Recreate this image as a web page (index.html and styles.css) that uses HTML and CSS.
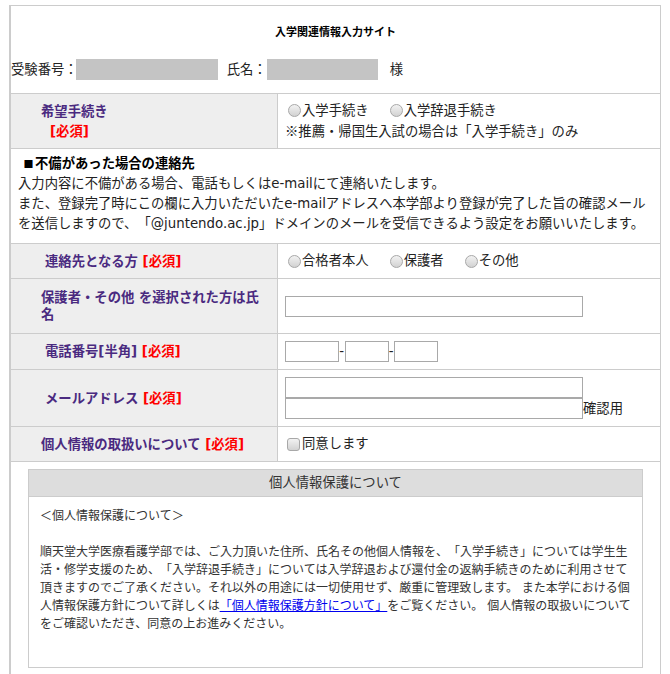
FILE: index.html
```html
<!DOCTYPE html>
<html lang="ja">
<head>
<meta charset="utf-8">
<title>入学関連情報入力サイト</title>
<link rel="stylesheet" href="styles.css">
</head>
<body>
<div class="page">
  <h1 class="title">入学関連情報入力サイト</h1>
  <div class="ident">
    <span>受験番号：</span><span class="mask w1"></span><span class="name-label">氏名：</span><span class="mask w2"></span><span class="sama">様</span>
  </div>

  <div class="form">
    <div class="row h55">
      <div class="th"><div class="lbl">希望手続き<span class="req req-block">[必須]</span></div></div>
      <div class="td">
        <div class="opts">
          <label class="opt"><input type="radio" name="proc" class="radio"><span>入学手続き</span></label>
          <label class="opt"><input type="radio" name="proc" class="radio"><span>入学辞退手続き</span></label>
        </div>
        <div class="note"><span class="cjk">※</span>推薦・帰国生入試の場合は「入学手続き」のみ</div>
      </div>
    </div>

    <div class="row full h95">
      <div class="sec-head"><span class="cjk sq">■</span>不備があった場合の連絡先</div>
      <div class="sec-text">入力内容に不備がある場合、電話もしくはe-mailにて連絡いたします。<br>また、登録完了時にこの欄に入力いただいたe-mailアドレスへ本学部より登録が完了した旨の確認メール<br>を送信しますので、「@juntendo.ac.jp」ドメインのメールを受信できるよう設定をお願いいたします。</div>
    </div>

    <div class="row h35">
      <div class="th indent"><div class="lbl">連絡先となる方 <span class="req">[必須]</span></div></div>
      <div class="td">
        <div class="opts">
          <label class="opt"><input type="radio" name="contact" class="radio"><span>合格者本人</span></label>
          <label class="opt"><input type="radio" name="contact" class="radio"><span>保護者</span></label>
          <label class="opt"><input type="radio" name="contact" class="radio"><span>その他</span></label>
        </div>
      </div>
    </div>

    <div class="row h55">
      <div class="th"><div class="lbl">保護者・その他 を選択された方は氏名</div></div>
      <div class="td">
        <input type="text" class="txt wide">
      </div>
    </div>

    <div class="row h36">
      <div class="th indent"><div class="lbl">電話番号[半角] <span class="req">[必須]</span></div></div>
      <div class="td">
        <div class="tel">
          <input type="text" class="txt p1"><span class="dash">-</span><input type="text" class="txt p2"><span class="dash">-</span><input type="text" class="txt p2">
        </div>
      </div>
    </div>

    <div class="row h57">
      <div class="th indent"><div class="lbl">メールアドレス <span class="req">[必須]</span></div></div>
      <div class="td">
        <input type="text" class="txt wide">
        <div class="confirm"><input type="text" class="txt wide"><span>確認用</span></div>
      </div>
    </div>

    <div class="row h35">
      <div class="th"><div class="lbl">個人情報の取扱いについて <span class="req">[必須]</span></div></div>
      <div class="td">
        <label class="opt"><input type="checkbox" class="check"><span>同意します</span></label>
      </div>
    </div>
  </div>

  <div class="privacy">
    <div class="privacy-head">個人情報保護について</div>
    <div class="privacy-body">＜個人情報保護について＞<br><br>順天堂大学医療看護学部では、ご入力頂いた住所、氏名その他個人情報を、「入学手続き」については学生生<br>活・修学支援のため、「入学辞退手続き」については入学辞退および還付金の返納手続きのために利用させて<br>頂きますのでご了承ください。それ以外の用途には一切使用せず、厳重に管理致します。 また本学における個<br>人情報保護方針について詳しくは<a href="#" class="link">「個人情報保護方針について」</a>をご覧ください。 個人情報の取扱いについて<br>をご確認いただき、同意の上お進みください。</div>
  </div>
</div>
</body>
</html>
```
FILE: styles.css
```css
html {
  overflow: hidden;
}

body {
  margin: 0;
  font-family: "DejaVu Sans", "Noto Sans CJK JP", sans-serif;
  font-size: 13.33px;
  color: #222;
  background: #fff;
  text-spacing-trim: space-all;
}

.cjk {
  font-family: "Noto Sans CJK JP", sans-serif;
}

.page {
  margin: 5px 0 0 9px;
  width: 649px;
  border: 1px solid #ccc;
  border-left-width: 2px;
  padding-bottom: 30px;
}

.title {
  margin: 0;
  padding-top: 17px;
  font-size: 11px;
  line-height: 20px;
  font-weight: bold;
  text-align: center;
  color: #000;
}

.ident {
  display: flex;
  align-items: center;
  height: 21px;
  margin-top: 16px;
  line-height: 21px;
  color: #222;
}

.mask {
  display: block;
  height: 21px;
  background: #c4c4c4;
}

.w1 {
  width: 142px;
  margin-left: -2px;
}

.w2 {
  width: 111px;
}

.name-label {
  margin-left: 9px;
}

.sama {
  margin-left: 12px;
}

.form {
  margin-top: 13px;
  border-top: 1px solid #ccc;
}

.row {
  display: grid;
  grid-template-columns: 267px 1fr;
  border-bottom: 1px solid #ccc;
  box-sizing: border-box;
}

.h35 { height: 35px; }
.h36 { height: 36px; }
.h55 { height: 55px; }
.h57 { height: 57px; }
.h95 { height: 95px; }

.th {
  background: #eee;
  border-right: 1px solid #ccc;
  padding: 0 10px 0 30px;
  display: flex;
  align-items: center;
  color: #4a2a80;
  font-weight: bold;
  line-height: 17px;
}

.th.indent {
  padding-left: 34px;
}

.lbl {
  min-width: 0;
}

.req {
  color: #f00;
}

.req-block {
  display: block;
  margin: 3px 0 0 9px;
}

.td {
  padding: 0 7px;
  display: flex;
  flex-direction: column;
  justify-content: center;
  align-items: flex-start;
  line-height: 20px;
}

.opts {
  display: flex;
  align-items: center;
}

.opt {
  display: inline-flex;
  align-items: center;
  margin-right: 18px;
}

.radio,
.check {
  appearance: none;
  -webkit-appearance: none;
  width: 13px;
  height: 13px;
  margin: 0 1px 0 3px;
  border: 1px solid #a8a8a8;
  background: linear-gradient(#f2f2f2, #d2d2d2);
  box-sizing: border-box;
  flex: none;
}

.radio {
  border-radius: 50%;
}

.check {
  border-radius: 3px;
  margin-left: 2px;
  margin-right: 2px;
}

.full {
  display: block;
  padding: 5px 0 8px 7px;
  line-height: 20px;
}

.sec-head {
  font-weight: bold;
  color: #000;
  padding-left: 4px;
}

.sq {
  display: inline-block;
  width: 13px;
  font-size: 10px;
  text-align: center;
}

.sec-text {
  color: #222;
  white-space: nowrap;
}

.txt {
  border: 1px solid #a9a9a9;
  height: 21px;
  box-sizing: border-box;
  padding: 0 2px;
  margin: 0;
  background: #fff;
  font: inherit;
}

.wide { width: 298px; }
.p1 { width: 54px; }
.p2 { width: 44px; }

.tel {
  display: flex;
  align-items: center;
}

.dash {
  display: inline-block;
  width: 5.5px;
  text-align: center;
  line-height: 21px;
}

.confirm {
  display: flex;
  align-items: center;
}

.privacy {
  margin: 7px 17px 0;
  border: 1px solid #ccc;
}

.privacy-head {
  background: #ddd;
  height: 26px;
  line-height: 26px;
  text-align: center;
  border-bottom: 1px solid #ccc;
  color: #333;
}

.privacy-body {
  height: 170px;
  box-sizing: border-box;
  padding: 10px 5px 0 11px;
  font-size: 12px;
  line-height: 18px;
  color: #333;
  white-space: nowrap;
  overflow: hidden;
}

.link {
  color: #0000ee;
  text-decoration: underline;
}
```
